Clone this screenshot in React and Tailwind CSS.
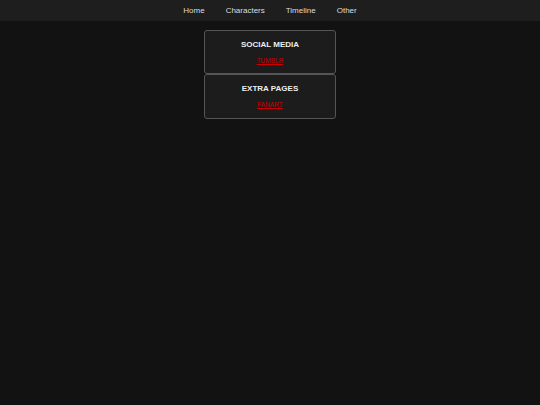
export default function App() {
  return (
    <div className="min-h-[405px] w-full bg-[#121212]" style={{ fontFamily: '"Liberation Sans", Arial, sans-serif' }}>
      <nav className="h-[21px] bg-[#1e1e1e] flex items-center justify-center gap-[21px] text-[8px] text-[#dddddd]">
        <span>Home</span>
        <span>Characters</span>
        <span>Timeline</span>
        <span>Other</span>
      </nav>
      <div className="flex flex-col items-center pt-[9px]">
        <div className="w-[132px] h-[44px] border border-[#555555] rounded-[3px] bg-[#1c1c1c] flex flex-col items-center pt-[10px]">
          <div className="text-[8px] font-bold text-[#eeeeee] leading-none">SOCIAL MEDIA</div>
          <a className="mt-[9px] text-[6.5px] text-[#cc0000] underline leading-none">TUMBLR</a>
        </div>
        <div className="w-[132px] h-[45px] border border-[#555555] rounded-[3px] bg-[#1c1c1c] flex flex-col items-center pt-[10px]">
          <div className="text-[8px] font-bold text-[#eeeeee] leading-none">EXTRA PAGES</div>
          <a className="mt-[9px] text-[6.5px] text-[#cc0000] underline leading-none">FANART</a>
        </div>
      </div>
    </div>
  );
}
